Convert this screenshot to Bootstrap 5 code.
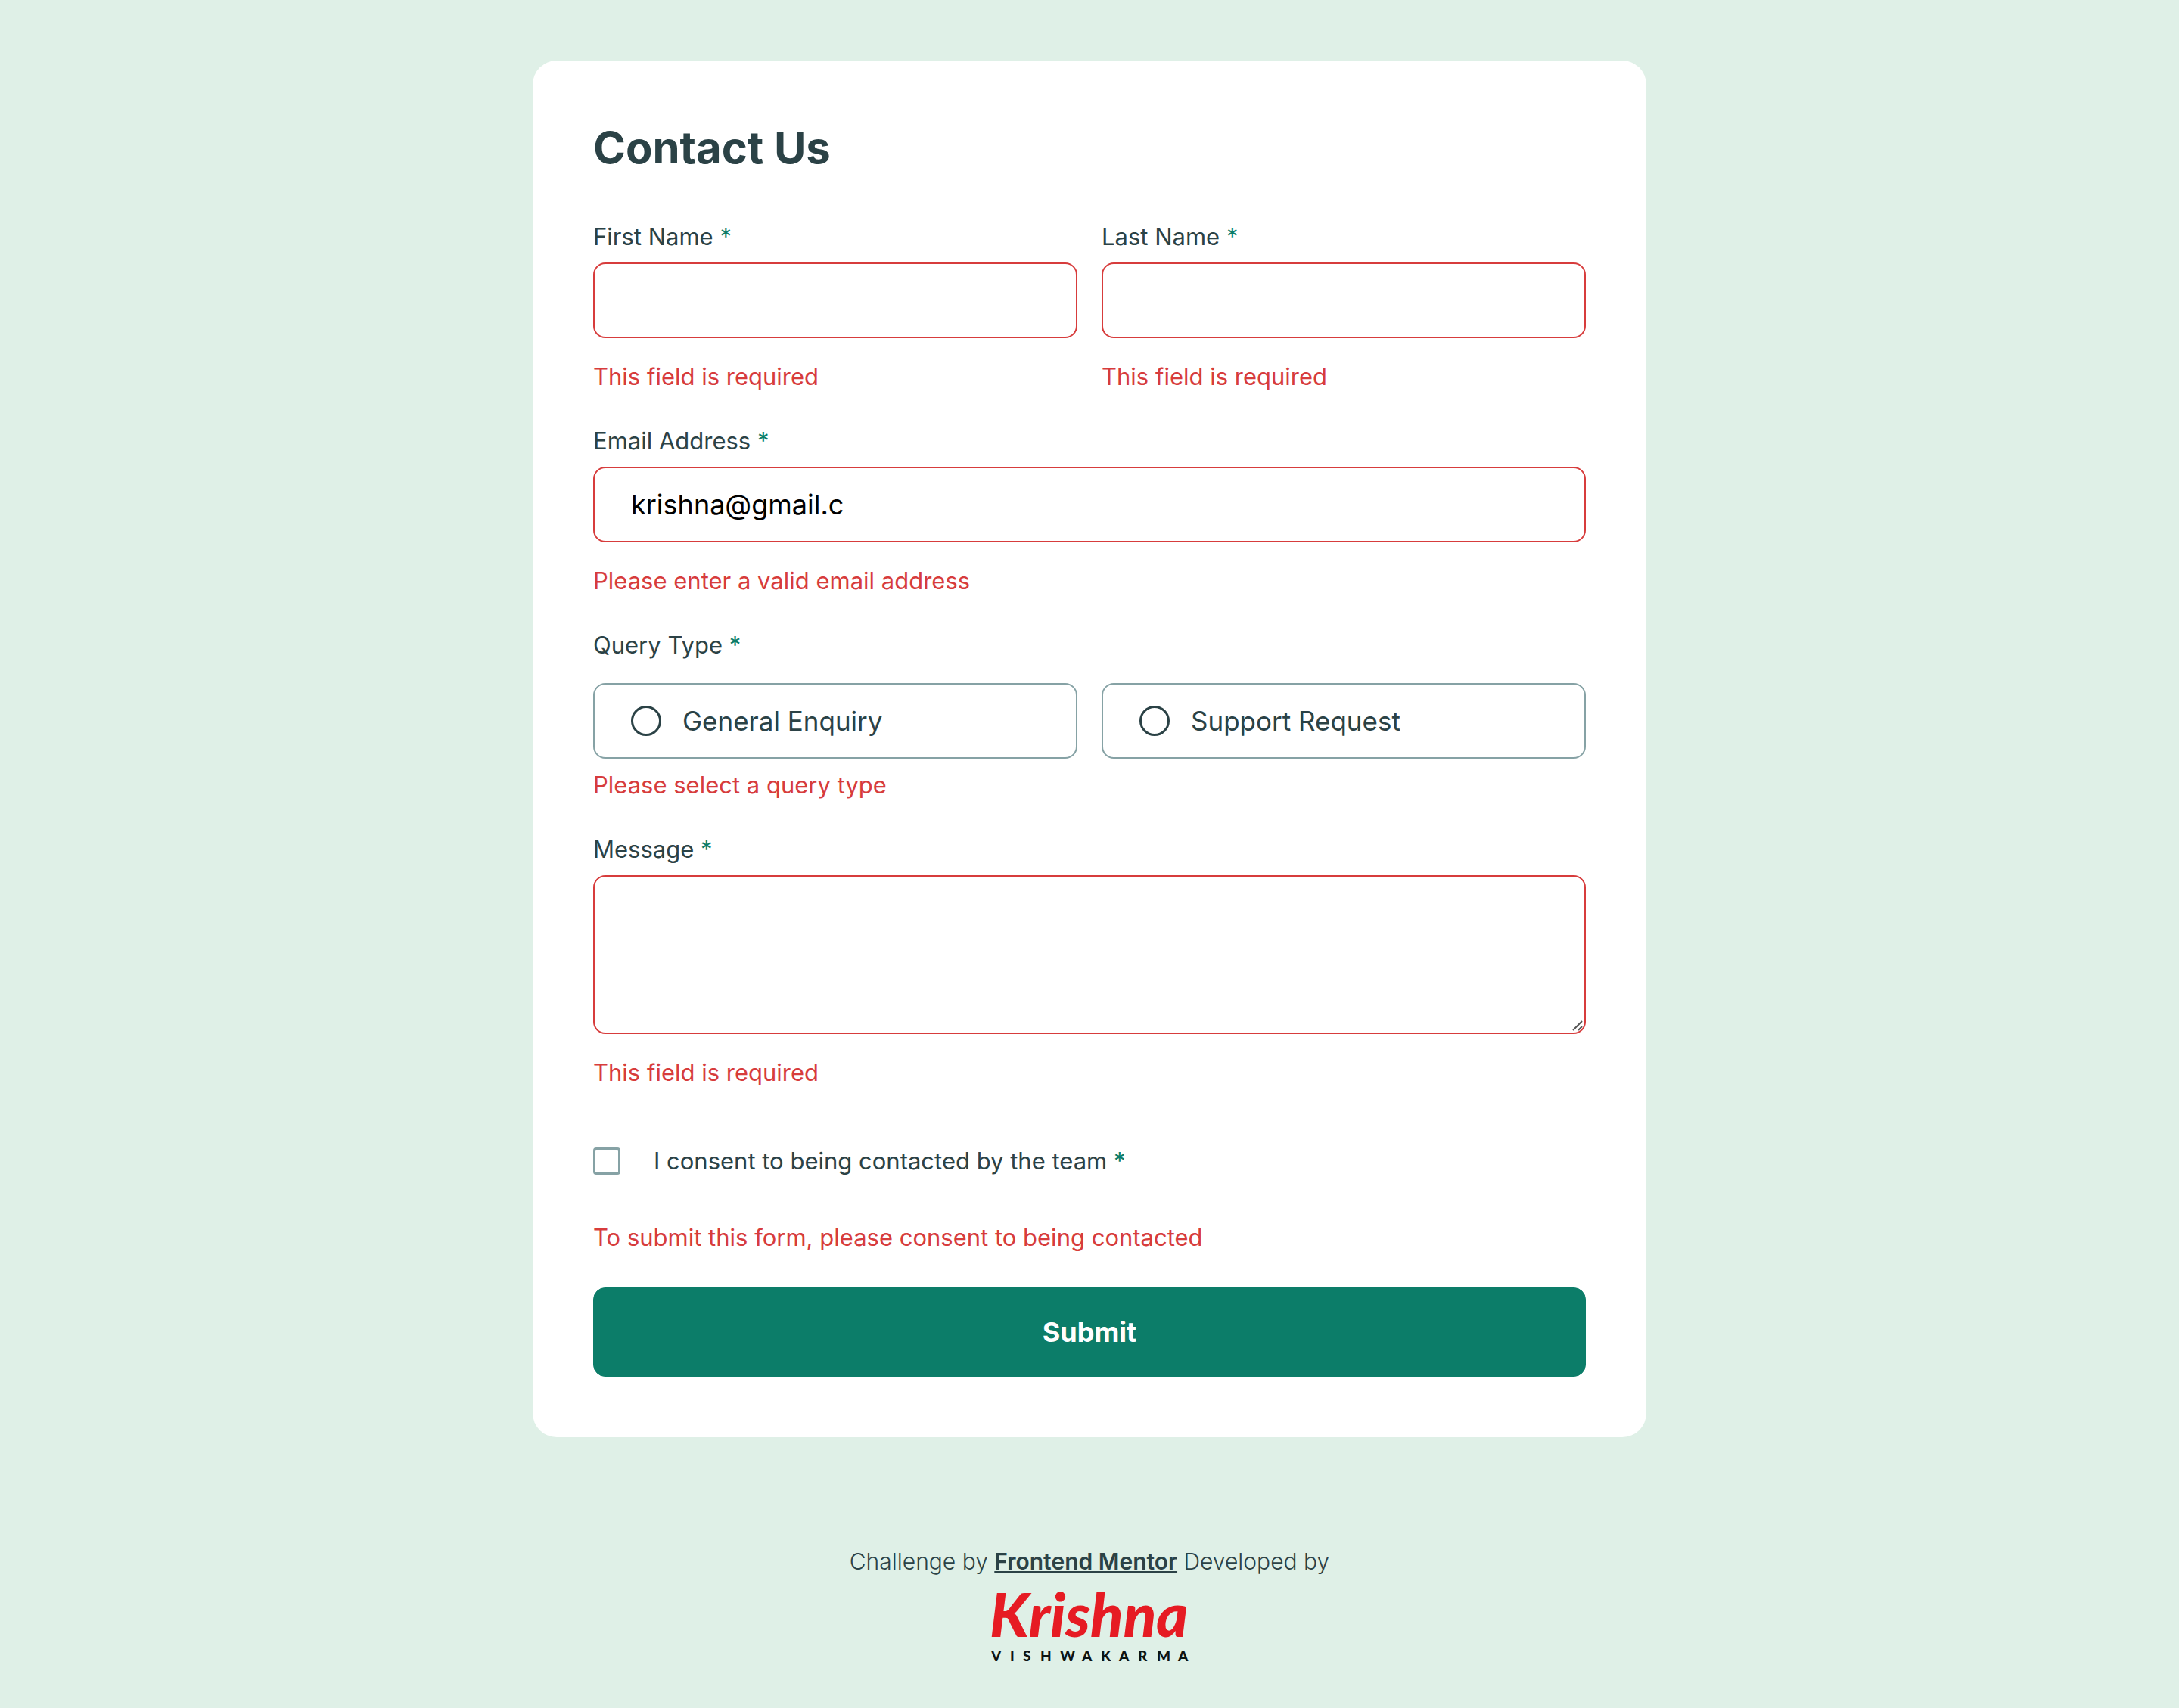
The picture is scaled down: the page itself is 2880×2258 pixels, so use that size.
<!DOCTYPE html>
<html lang="en">
<head>
<meta charset="utf-8">
<meta name="viewport" content="width=device-width, initial-scale=1">
<title>Contact form</title>
<link href="https://cdn.jsdelivr.net/npm/bootstrap@5.3.0/dist/css/bootstrap.min.css" rel="stylesheet">
<style>
:root{--ink:#2b4246;--line:#86a2a5;--brand:#0c7d69;--alert:#d73c3c;--mint:#dff0e7}
body{background:var(--mint);color:var(--ink);font-family:Inter,"Liberation Sans",sans-serif;font-size:31px;line-height:48px}
.page-main{padding-top:80px}
.contact-card{max-width:1472px;border-radius:32px;padding:80px}
.contact-title{font-size:58px;line-height:70px;margin-bottom:59px}
.field-label{font-size:31px;line-height:48px;margin-bottom:10px}
.field-label.roomy{margin-bottom:26px}
.req{color:var(--brand)}
.field-box{height:100px;border:2px solid var(--alert);border-radius:16px;padding:0 48px;font-size:36px;color:#000}
textarea.field-box{height:210px;padding:24px 48px;resize:none}
.field-error{color:var(--alert);margin:27px 0 0}
.field-error.snug{margin-top:11px}
.stack{gap:37px}
.pair{--bs-gutter-x:32px}
.choice{height:100px;border:2px solid var(--line);border-radius:16px;padding:0 48px;gap:28px;font-size:35px}
.choice .form-check-input{width:40px;height:40px;border:3px solid var(--ink)}
.consent{gap:44px;margin-top:69px}
.consent .form-check-input{width:36px;height:36px;border:3px solid var(--line);border-radius:4px}
.form-check-input{background-color:#fff}
.consent-error{margin-top:53px}
.submit-btn{--bs-btn-bg:var(--brand);--bs-btn-color:#fff;--bs-btn-border-color:var(--brand);--bs-btn-hover-bg:var(--ink);--bs-btn-hover-color:#fff;height:118px;border-radius:16px;margin-top:42px;font-size:36px;font-weight:700}
.grip{right:4px;bottom:4px}
.credit{margin-top:144px;font-size:30px;line-height:40px;font-weight:300}
.credit a{color:inherit;font-weight:600;text-decoration-thickness:3px}
</style>
</head>
<body>
<main class="page-main d-flex justify-content-center px-3">
<form class="contact-card bg-white w-100" novalidate>
<h1 class="contact-title fw-bold">Contact Us</h1>
<div class="d-flex flex-column stack">
<div class="row pair">
<div class="col-6">
<label class="field-label d-block" for="first">First Name <span class="req">*</span></label>
<input class="form-control field-box" id="first" type="text">
<p class="field-error">This field is required</p>
</div>
<div class="col-6">
<label class="field-label d-block" for="last">Last Name <span class="req">*</span></label>
<input class="form-control field-box" id="last" type="text">
<p class="field-error">This field is required</p>
</div>
</div>
<div>
<label class="field-label d-block" for="email">Email Address <span class="req">*</span></label>
<input class="form-control field-box" id="email" type="email" value="krishna@gmail.c">
<p class="field-error">Please enter a valid email address</p>
</div>
<fieldset>
<legend class="field-label roomy float-none">Query Type <span class="req">*</span></legend>
<div class="row pair">
<div class="col-6"><label class="choice d-flex align-items-center" for="general"><input class="form-check-input m-0 flex-shrink-0" type="radio" name="query" id="general">General Enquiry</label></div>
<div class="col-6"><label class="choice d-flex align-items-center" for="support"><input class="form-check-input m-0 flex-shrink-0" type="radio" name="query" id="support">Support Request</label></div>
</div>
<p class="field-error snug">Please select a query type</p>
</fieldset>
<div>
<label class="field-label d-block" for="message">Message <span class="req">*</span></label>
<div class="position-relative">
<textarea class="form-control field-box" id="message"></textarea>
<svg class="grip position-absolute" width="14" height="14" viewBox="0 0 14 14" fill="none" stroke="#555" stroke-width="2" aria-hidden="true"><path d="M1 13 13 1M8 13 13 8"/></svg>
</div>
<p class="field-error">This field is required</p>
</div>
</div>
<div class="consent d-flex align-items-center">
<input class="form-check-input m-0 flex-shrink-0" type="checkbox" id="consent">
<label for="consent">I consent to being contacted by the team <span class="req">*</span></label>
</div>
<p class="field-error consent-error">To submit this form, please consent to being contacted</p>
<button class="btn submit-btn w-100 d-block" type="submit">Submit</button>
</form>
</main>
<footer class="credit text-center">
Challenge by <a href="#">Frontend Mentor</a> Developed by
<svg class="d-block mx-auto" width="300" height="140" viewBox="-20 -18 300 140" role="img" aria-label="Krishna Vishwakarma">
<text x="-2" y="62" font-family="Lato, sans-serif" font-weight="900" font-style="italic" font-size="80" fill="#e61b23">Krishna</text>
<text x="0 25 42 65 91 120 145 169 194 219 247" y="94" font-family="Lato, sans-serif" font-weight="900" font-size="19" fill="#0d1412">VISHWAKARMA</text>
</svg>
</footer>
<script src="https://cdn.jsdelivr.net/npm/bootstrap@5.3.0/dist/js/bootstrap.bundle.min.js"></script>
</body>
</html>
